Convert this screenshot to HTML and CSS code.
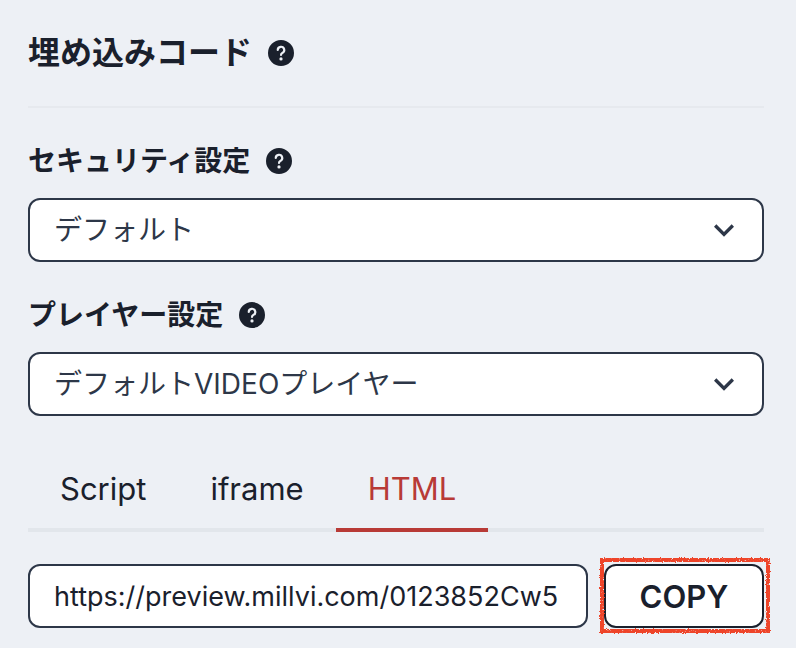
FILE: index.html
```html
<!DOCTYPE html>
<html lang="ja">
	<head>
		<meta charset="utf-8">
		<title>埋め込みコード</title>
		<meta name="viewport" content="width=device-width">
		<link rel="stylesheet" href="styles.css">
	</head>
	<body>

		<!-- iconos compartidos -->
		<svg class="sprite" aria-hidden="true">
			<symbol id="ayuda" viewBox="0 0 24 24">
				<path d="M12,0A12,12,0,1,0,24,12,12.013,12.013,0,0,0,12,0Zm0,19a1.5,1.5,0,1,1,1.5-1.5A1.5,1.5,0,0,1,12,19Zm1.6-6.08a1,1,0,0,0-.6.917,1,1,0,1,1-2,0,3,3,0,0,1,1.8-2.75A2,2,0,1,0,10,9.255a1,1,0,1,1-2,0,4,4,0,1,1,5.6,3.666Z"/>
			</symbol>
			<symbol id="flecha" viewBox="0 0 24 24">
				<path d="M16.59 8.59L12 13.17 7.41 8.59 6 10l6 6 6-6z"/>
			</symbol>
		</svg>

		<main class="contenedor">

			<header class="titulo">
				<h1>埋め込みコード</h1>
				<svg class="icono_ayuda"><use href="#ayuda"/></svg>
			</header>

			<div class="campo">
				<div class="etiqueta">
					<label for="seguridad">セキュリティ設定</label>
					<svg class="icono_ayuda"><use href="#ayuda"/></svg>
				</div>
				<div class="selector">
					<select id="seguridad">
						<option>デフォルト</option>
					</select>
					<svg class="flecha"><use href="#flecha"/></svg>
				</div>
			</div>

			<div class="campo">
				<div class="etiqueta">
					<label for="reproductor">プレイヤー設定</label>
					<svg class="icono_ayuda"><use href="#ayuda"/></svg>
				</div>
				<div class="selector">
					<select id="reproductor">
						<option>デフォルトVIDEOプレイヤー</option>
					</select>
					<svg class="flecha"><use href="#flecha"/></svg>
				</div>
			</div>

			<div class="pestanas" role="tablist">
				<button class="pestana" role="tab">Script</button>
				<button class="pestana" role="tab">iframe</button>
				<button class="pestana activa" role="tab" aria-selected="true">HTML</button>
			</div>

			<div class="codigo">
				<input type="text" id="codigo" aria-label="HTML" value="https://preview.millvi.com/0123852Cw5" readonly>
				<div class="copiar">
					<button class="boton_copiar">COPY</button>
					<!-- marco rojo dibujado a mano -->
					<svg class="marco" viewBox="0 0 174 78" aria-hidden="true">
						<filter id="tiza" x="0" y="0" width="174" height="78" filterUnits="userSpaceOnUse" color-interpolation-filters="sRGB">
							<feTurbulence type="fractalNoise" baseFrequency="0.7" numOctaves="2" seed="4" result="ruido"/>
							<feDisplacementMap in="SourceGraphic" in2="ruido" scale="3" xChannelSelector="R" yChannelSelector="G" result="borde"/>
							<feColorMatrix in="ruido" type="matrix" values="0 0 0 0 0  0 0 0 0 0  0 0 0 0 0  0 0 -4 0 3.6" result="grano"/>
							<feComposite in="borde" in2="grano" operator="in"/>
						</filter>
						<rect x="4" y="4" width="166" height="71" filter="url(#tiza)"/>
					</svg>
				</div>
			</div>

		</main>

	</body>
</html>
```
FILE: styles.css
```css
* {
    margin: 0;
    padding: 0;
    box-sizing: border-box;
    font-family: Inter, "Noto Sans CJK JP", sans-serif;
}

body {
    background-color: #edf0f5;
    color: #1a202c;
}

.sprite {
    position: absolute;
    width: 0;
    height: 0;
}

.contenedor {
    padding: 32px 32px 20px 28px;
}

/* titulo y etiquetas */
.titulo {
    display: flex;
    align-items: center;
    gap: 16px;
    padding-bottom: 32px;
    margin-bottom: 32px;
    border-bottom: 2px solid #e6e9ee;
}

.titulo h1 {
    font-size: 32px;
    line-height: 42px;
    font-weight: 600;
}

.campo {
    margin-bottom: 32px;
}

.etiqueta {
    display: flex;
    align-items: center;
    gap: 16px;
    margin-bottom: 16px;
}

.etiqueta label {
    font-size: 28px;
    line-height: 42px;
    font-weight: 600;
}

.icono_ayuda {
    width: 26px;
    height: 26px;
    fill: #1a202c;
}

/* selectores */
.selector {
    position: relative;
}

.selector select {
    display: block;
    width: 100%;
    height: 64px;
    padding: 0 80px 0 24px;
    appearance: none;
    border: 2px solid #2d3748;
    border-radius: 12px;
    background-color: white;
    color: #2d3748;
    font-size: 28px;
    font-weight: 400;
}

.flecha {
    position: absolute;
    right: 20px;
    top: 12px;
    width: 40px;
    height: 40px;
    fill: #2d3748;
    pointer-events: none;
}

/* pestanas */
.pestanas {
    display: flex;
    margin-bottom: 32px;
    border-bottom: 4px solid #e2e6eb;
}

.pestana {
    height: 84px;
    padding: 0 32px;
    margin-bottom: -4px;
    border: none;
    border-bottom: 4px solid transparent;
    background: none;
    color: #1a202c;
    font-size: 31px;
    cursor: pointer;
}

.pestana.activa {
    color: #b83a36;
    border-color: #b83a36;
}

/* codigo y boton */
.codigo {
    display: flex;
    gap: 16px;
}

.codigo input {
    flex: 1;
    min-width: 0;
    height: 64px;
    padding: 0 22px 0 24px;
    border: 2px solid #2d3748;
    border-radius: 12px;
    background-color: white;
    color: #1a202c;
    font-size: 27px;
}

.copiar {
    position: relative;
}

.boton_copiar {
    width: 160px;
    height: 64px;
    border: 2px solid #1a202c;
    border-radius: 12px;
    background-color: white;
    color: #1a202c;
    font-size: 31px;
    font-weight: 600;
    cursor: pointer;
}

.marco {
    position: absolute;
    left: -6px;
    top: -8px;
    width: 174px;
    height: 78px;
    fill: none;
    stroke: #ee4429;
    stroke-width: 4px;
    pointer-events: none;
}
```
